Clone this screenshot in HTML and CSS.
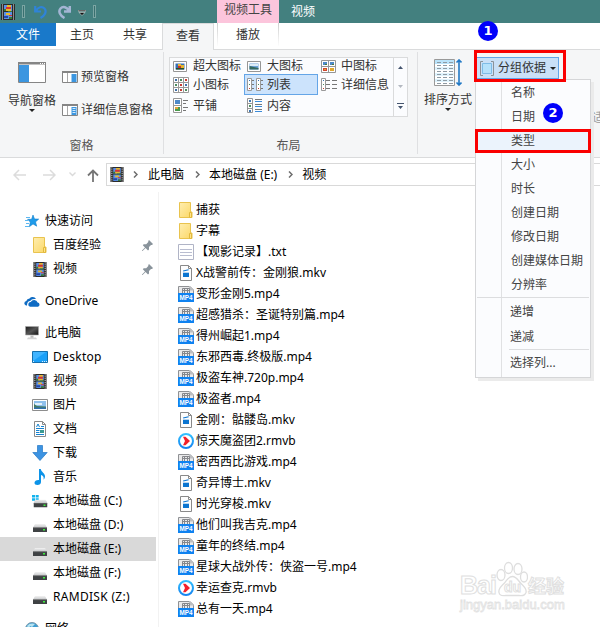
FILE: index.html
```html
<!DOCTYPE html>
<html lang="zh-CN">

<head>
    <meta charset="UTF-8" />
    <meta name="viewport" content="width=device-width, initial-scale=1" />
    <title>视频</title>
    <link rel="stylesheet" href="styles.css">
</head>

<body>
    <!-- icons -->
    <svg class="defs" width="0" height="0">
        <defs>
            <linearGradient id="gFolder" x1="0" y1="0" x2="1" y2="1"><stop offset="0" stop-color="#ffeeb0" /><stop offset="1" stop-color="#fbd766" /></linearGradient>
            <linearGradient id="gPlay" x1="0" y1="0" x2="0" y2="1"><stop offset="0" stop-color="#32c0ff" /><stop offset="1" stop-color="#1583f0" /></linearGradient>
            <linearGradient id="gScreen" x1="0" y1="0" x2="1" y2="1"><stop offset="0" stop-color="#1a1a1a" /><stop offset=".5" stop-color="#555" /><stop offset="1" stop-color="#111" /></linearGradient>
            <linearGradient id="gDrive" x1="0" y1="0" x2="0" y2="1"><stop offset="0" stop-color="#f3f3f3" /><stop offset="1" stop-color="#c4c6c8" /></linearGradient>
        </defs>
        <symbol id="film" viewBox="0 0 14 16">
            <path fill="#2b2b2b" d="M0 0h14v16H0z" />
            <path stroke="#e8e8e8" stroke-width="1" stroke-dasharray="1 1" d="M1.500 .5v15M12.500 .5v15" />
            <path fill="#5b8fe6" d="M3 1h8v6H3zM3 8h8v7H3z" />
            <path fill="#e8b92c" d="M6 1h4v2H6zM5 5h5v2H5zM5 9h4v2H5z" />
            <path fill="#d9342b" d="M5 3h5v2H5zM8 11h3v1H8z" />
            <path fill="#3a7a35" d="M3 5h2v2H3zM7 7h4v1H7zM8 13h3v2H8z" />
            <path fill="#2547a8" d="M3 12h4v2H3z" />
        </symbol>
        <symbol id="folder" viewBox="0 0 14 16">
            <path fill="url(#gFolder)" stroke="#e9c34e" d="M.5.5h11v9.500h1.500v5.500H.5z" />
            <path fill="#ffe48a" stroke="#e2b93c" d="M10.500 10.500h2v5h-2z" />
        </symbol>
        <symbol id="txt" viewBox="0 0 16 16">
            <path fill="#fff" stroke="#b0b4c6" d="M.5.5h15v15H.5z" />
            <path stroke="#b9bdd0" d="M2 5.500h12M2 8.500h12M2 11.500h12" />
        </symbol>
        <symbol id="mkv" viewBox="0 0 16 16">
            <path fill="#fdfdfd" stroke="#898989" d="M2.500.5h8l3 3v12h-11z" />
            <path fill="none" stroke="#898989" d="M10.500.5v3h3" />
            <path fill="#0b75d1" d="M5 7h6v5H5zM5 5.500l5.500-1.300.3 1-5.500 1.400z" />
            <path stroke="#fff" stroke-width=".7" d="M5 7.500h6" />
        </symbol>
        <symbol id="mp4" viewBox="0 0 16 16">
            <path fill="#e9e9ea" stroke="#8f9194" d="M.5 15V.5H12L15.500 4v11z" />
            <path fill="#bcbec1" d="M11 0v4.500h5V4l-4-4z" />
            <path fill="none" stroke="#85878b" d="M4.500 7V2.500h7V7M6.500 2.500V7M9.500 2.500V7M4.500 4.500h7" />
            <path fill="#0f82f0" d="M0 7h16v9H0z" />
            <text class="mp4-text" x="8" y="14" text-anchor="middle" textLength="13" lengthAdjust="spacingAndGlyphs">MP4</text>
        </symbol>
        <symbol id="rmvb" viewBox="0 0 16 16">
            <circle cx="8" cy="8" r="7" fill="#fff" stroke="url(#gPlay)" stroke-width="2" />
            <path fill="#f3202a" d="M5 3.800h2.500L12 8l-4.500 4.200H5L7 8z" />
        </symbol>
        <symbol id="star" viewBox="0 0 14 14">
            <path fill="#1f9bea" stroke="#1180cb" stroke-width=".6" d="M8 1l1.500 4 4.200.1-3.200 2.800 1.200 4.300L8 9.900l-3.600 2.800.9-4.600L2.600 5.300h4z" />
            <path stroke="#5db7f0" d="M1 3.500h4M0 6.500h3M1 9.500h3M0 12.500h4" />
        </symbol>
        <symbol id="pin" viewBox="0 0 11 11">
            <path fill="#89939b" d="M7 0l4 4-1 1-1 0-2 2 0 2.500-1 1L3.600 8 .5 11H0v-.5L3 7.400.8 5.200l.9-1H4.200L6.300 2V.9z" />
        </symbol>
        <symbol id="cloud" viewBox="0 0 16 11">
            <path fill="#0f6cc4" d="M3 9.500H2A2.300 2.300 0 0 1 2.300 5 3.400 3.400 0 0 1 5.500 2.500 4 4 0 0 1 12 3C8 2.500 6.500 4 6.300 5 4 5 3 7 3 9.500z" />
            <path fill="#0f6cc4" d="M6 10.800a2.400 2.400 0 0 1 .8-4.700 3.700 3.700 0 0 1 6.800.4 2.200 2.200 0 0 1 .3 4.300z" />
        </symbol>
        <symbol id="pc" viewBox="0 0 14 14">
            <path fill="url(#gScreen)" stroke="#aaa" stroke-width=".6" d="M.5.5h13v8.500H.5z" />
            <path fill="#bbb" d="M5.500 9.500h3V12h-3z" />
            <path fill="#d4d4d4" d="M3 11.500h8l1 1.800H2z" />
        </symbol>
        <symbol id="desktop" viewBox="0 0 16 12">
            <path fill="#1ba0f8" stroke="#1570ae" d="M.5.5h15v11H.5z" />
            <path fill="#40b4ff" d="M1 10L14 1H1z" />
            <path stroke="#d5efff" stroke-dasharray="1 1" d="M1 10.500h2M10 10.500h5" />
        </symbol>
        <symbol id="picture" viewBox="0 0 16 12">
            <path fill="#fff" stroke="#8d8d8d" d="M.5.5h15v11H.5z" />
            <path fill="#8fc0ec" d="M2 2h12v8H2z" />
            <path fill="#e4f1fb" d="M3 4h7v2H3z" />
            <path fill="#467c64" d="M2 5l3 2 9 .5V9H2z" />
            <path fill="#2f6fae" d="M2 8.500h12V10H2z" />
        </symbol>
        <symbol id="doc" viewBox="0 0 14 16">
            <path fill="#fff" stroke="#8a8a8a" d="M1.500.5h8l3 3v12h-11z" />
            <path fill="none" stroke="#8a8a8a" d="M9.500.5v3h3" />
            <path fill="none" stroke="#1683d0" d="M3.500 6l1.500-3 1.500 3M8 5.500h3M3 7.500h8M3 9.500h3.500M3 11.500h3.500M3 13.500h8" />
            <path fill="#3b9a92" d="M7 9h4v3H7z" />
        </symbol>
        <symbol id="download" viewBox="0 0 16 16">
            <path fill="#3c93e2" stroke="#2477c4" stroke-width=".7" d="M5.500.5h5v7h4.700L8 15.500.8 7.500h4.700z" />
        </symbol>
        <symbol id="music" viewBox="0 0 12 16">
            <path fill="#0c93e8" d="M5 0h1.800c.2 3 4.500 4.300 4.200 7.500-.1 1.500-.7 2.500-1.500 3.200.8-3-.7-4.200-2.500-4.700v7c0 1.700-1.500 3-3.500 3S.5 15 .5 13.700C.5 12 2.500 10.700 5 11z" />
        </symbol>
        <symbol id="drive" viewBox="0 0 14 8">
            <path fill="url(#gDrive)" d="M2 0h10l2 3.500H0z" />
            <path fill="#3f4244" d="M0 3.500h14V8H0z" />
            <path fill="#777" d="M0 3.500h14v.6H0z" />
            <path fill="#3cf03c" d="M10 5h2v1.500h-2z" />
        </symbol>
        <symbol id="sysdrive" viewBox="0 0 16 14">
            <path fill="#12b3ee" d="M0 1h3v2.500H0zM3.700 1h3v2.500h-3zM0 4.200h3v2.500H0zM3.700 4.200h3v2.500h-3z" />
            <use href="#drive" x="1.500" y="5.500" width="14" height="8" />
        </symbol>
        <symbol id="globe" viewBox="0 0 14 14">
            <circle cx="7" cy="7" r="6.500" fill="#3f9ed2" stroke="#7b98aa" />
            <path fill="#b7e3f1" d="M2 4c2-3 6-3 8-2L7 5 5 4 4 7z" />
        </symbol>
        <symbol id="preview" viewBox="0 0 16 12">
            <path fill="#fff" stroke="#858585" d="M.5.5h15v11H.5z" />
            <path fill="#858585" d="M0 0h16v2H0z" />
            <path stroke="#a8a8a8" d="M5.500 2v9" />
            <path fill="#3b96e0" d="M9.500 3h5v8h-5z" />
        </symbol>
        <symbol id="details" viewBox="0 0 16 12">
            <use href="#preview" width="16" height="12" />
            <path stroke="#d4eafb" d="M10.500 4.500h3M10.500 6.500h3M10.500 8.500h3" />
        </symbol>
        <symbol id="thumb" viewBox="0 0 14 11">
            <path fill="#fff" stroke="#969696" d="M.5.5h13v10H.5z" />
            <path fill="#356fb8" d="M2.500 2.500h9v6h-9z" />
            <path fill="#e6b52e" d="M5 3h3v2H5zM7 4h4v3H7z" />
            <path fill="#c8342b" d="M5 5h3v2H5z" />
            <path fill="#294d26" d="M3 7h8v1.500H3z" />
        </symbol>
        <symbol id="large" viewBox="0 0 14 11">
            <path fill="#fff" stroke="#969696" d="M.5.5h13v10H.5z" />
            <path fill="#6fa5dd" d="M2.500 2.500h9v6h-9z" />
            <path fill="#dcecf8" d="M3 3h8v2H3z" />
            <path fill="#356b61" d="M2.500 5l9 2v1.500h-9z" />
        </symbol>
        <symbol id="medium" viewBox="0 0 15 13">
            <path fill="#fff" stroke="#969696" d="M.5.5h14v12H.5zM7.500.5v12M.5 6.500h14" />
            <path fill="#4d89c8" d="M2 2h4v3H2zM9 2h4v3H9z" />
            <path fill="#d1452f" d="M2 8h4v3H2z" />
            <path fill="#e0a72c" d="M9 8h4v3H9zM3 9h2v1H3z" />
            <path fill="#4a7a3d" d="M4 4h2v1H4zM11 4h2v1h-2z" />
        </symbol>
        <symbol id="small" viewBox="0 0 16 16">
            <path fill="#fff" stroke="#999" d="M.5.5h15v15H.5zM5.500.5v15M10.500.5v15M.5 5.500h15M.5 10.500h15" />
            <path fill="#3e6fa9" d="M2 2h2v2H2zM12 7h2v2h-2zM2 12h2v2H2z" />
            <path fill="#4b8b5f" d="M7 2h2v2H7zM2 7h2v2H2zM12 12h2v2h-2z" />
            <path fill="#c73b32" d="M12 2h2v2h-2zM7 7h2v2H7zM7 12h2v2H7z" />
        </symbol>
        <symbol id="list" viewBox="0 0 16 13">
            <path fill="#fff" stroke="#999" d="M.5.5h4v12h-4zM9.500.5h4v12h-4z" />
            <path stroke="#3e78b5" d="M2 2.500h1M11 2.500h1" />
            <path stroke="#4b8b5f" d="M2 6.500h1M11 6.500h1" />
            <path stroke="#c73b32" d="M2 10.500h1M11 10.500h1" />
            <path stroke="#777" d="M5 2.500h2M5 6.500h2M5 10.500h2M14 2.500h2M14 6.500h2M14 10.500h2" />
        </symbol>
        <symbol id="detail" viewBox="0 0 16 13">
            <path fill="#fff" stroke="#999" d="M.5.5h4v12h-4z" />
            <path stroke="#3e78b5" d="M2 2.500h1" />
            <path stroke="#4b8b5f" d="M2 6.500h1" />
            <path stroke="#c73b32" d="M2 10.500h1" />
            <path stroke="#777" d="M5 2.500h4M11 2.500h5M5 6.500h4M11 6.500h5M5 10.500h4M11 10.500h5" />
        </symbol>
        <symbol id="tiles" viewBox="0 0 16 15">
            <path fill="#fff" stroke="#969696" d="M.5.5h8v14h-8zM.5 7.500h8" />
            <path fill="#4d89c8" d="M2 2h5v4H2z" />
            <path fill="#4a9b4d" d="M2 9h5v4H2z" />
            <path fill="#e4a53a" d="M2 9h3v2H2z" />
            <path stroke="#777" d="M10 2.500h5M10 5.500h3M10 9.500h5M10 12.500h3" />
        </symbol>
        <symbol id="content" viewBox="0 0 16 15">
            <path fill="#fff" stroke="#969696" d="M.5.5h5v14h-5zM.5 5.500h5M.5 10.500h5" />
            <path fill="#3e78b5" d="M2 2h2v2H2zM2 12h2v2H2z" />
            <path fill="#4b8b5f" d="M2 7h2v2H2z" />
            <path stroke="#777" d="M8 1.500h7M8 6.500h7M8 11.500h7" />
            <path stroke="#3b8bd8" d="M8 3.500h7M8 8.500h7M8 13.500h7" />
        </symbol>
        <symbol id="down" viewBox="0 0 6 3">
            <path fill="#222" d="M0 0h6L3 3z" />
        </symbol>
    </svg>

    <div class="window">
        <header class="titlebar">
            <div class="quick">
                <svg width="14" height="16"><use href="#film" /></svg>
                <span class="bar"></span>
                <svg class="undo" width="13" height="14" viewBox="0 0 13 14"><path fill="none" stroke="#2f83d8" stroke-width="2.200" d="M1.200 1v5.500H7M2 6C4 2 8 .8 10.500 3.500c2.500 3 .5 7-4 9.500" /></svg>
                <svg class="redo" width="13" height="14" viewBox="0 0 13 14"><path fill="none" stroke="#a3b5d4" stroke-width="2.500" d="M11.800 1v5.500H6M11 6C9 2 5 .8 2.500 3.500c-2.500 3-.5 7 4 9.500" /></svg>
                <svg class="more" width="8" height="6" viewBox="0 0 8 6"><path fill="#111" stroke="#fff" stroke-width=".5" d="M0 0h8v1.200H0zM1 2.500h6L4 5.500z" /></svg>
                <span class="bar"></span>
            </div>
            <div class="context">视频工具</div>
            <div class="title">视频</div>
        </header>

        <nav class="tabs">
            <div class="tab file">文件</div>
            <div class="tab home">主页</div>
            <div class="tab share">共享</div>
            <div class="tab active">查看</div>
            <div class="tab play">播放</div>
        </nav>

        <section class="ribbon">
            <div class="group panes">
                <div class="group-body">
                    <div class="big-btn">
                        <svg width="28" height="21" viewBox="0 0 28 21"><path fill="#fff" stroke="#858585" d="M.5.5h27v20H.5z" /><path fill="#858585" d="M0 0h28v2.500H0z" /><path fill="#3b96e0" d="M1 3h10v17H1z" /><path stroke="#fff" d="M22 1.500h1M24 1.500h1M26 1.500h1" /></svg>
                        <span>导航窗格</span>
                        <svg class="caret" width="6" height="3"><use href="#down" /></svg>
                    </div>
                    <div class="side-btns">
                        <div class="btn"><svg width="16" height="12"><use href="#preview" /></svg>预览窗格</div>
                        <div class="btn"><svg width="16" height="12"><use href="#details" /></svg>详细信息窗格</div>
                    </div>
                </div>
                <div class="group-name">窗格</div>
            </div>
            <div class="group layout">
                <div class="gallery">
                    <div class="views">
                        <div class="view"><span class="ico"><svg width="14" height="11"><use href="#thumb" /></svg></span>超大图标</div>
                        <div class="view"><span class="ico"><svg width="14" height="11"><use href="#large" /></svg></span>大图标</div>
                        <div class="view"><span class="ico"><svg width="15" height="13"><use href="#medium" /></svg></span>中图标</div>
                        <div class="view"><span class="ico"><svg width="16" height="16"><use href="#small" /></svg></span>小图标</div>
                        <div class="view selected"><span class="ico"><svg width="16" height="13"><use href="#list" /></svg></span>列表</div>
                        <div class="view"><span class="ico"><svg width="16" height="13"><use href="#detail" /></svg></span>详细信息</div>
                        <div class="view"><span class="ico"><svg width="16" height="15"><use href="#tiles" /></svg></span>平铺</div>
                        <div class="view"><span class="ico"><svg width="16" height="15"><use href="#content" /></svg></span>内容</div>
                    </div>
                    <div class="scroll">
                        <svg width="5" height="3" viewBox="0 0 5 3"><path fill="#44546e" d="M0 3h5L2.500 0z" /></svg>
                        <svg width="5" height="3" viewBox="0 0 5 3"><path fill="#b4b9c1" d="M0 0h5L2.500 3z" /></svg>
                        <svg width="7" height="6" viewBox="0 0 7 6"><path fill="#44546e" d="M0 0h7v1H0zM1 3h5L3.500 6z" /></svg>
                    </div>
                </div>
                <div class="group-name">布局</div>
            </div>
            <div class="group current">
                <div class="big-btn">
                    <svg width="28" height="27" viewBox="0 0 28 27"><path fill="#fff" stroke="#999" d="M.5.5h20v26H.5z" /><path fill="#b9e3fa" d="M1 1h19v4H1z" /><path fill="#dff3fd" d="M1 8h19v3H1zM1 14h19v3H1zM1 20h19v3H1z" /><path stroke="#8e9aa3" stroke-dasharray="4 2" d="M3 3.500h16M3 6.500h16M3 9.500h16M3 12.500h16M3 15.500h16M3 18.500h16M3 21.500h16M3 24.500h16" /><path fill="none" stroke="#2179c5" stroke-width="1.600" d="M25 2v23M22.500 3.500L25 1l2.500 2.500M22.500 23.500L25 26l2.500-2.500" /></svg>
                    <span>排序方式</span>
                    <svg class="caret" width="6" height="3"><use href="#down" /></svg>
                </div>
                <div class="group-by">
                    <svg width="14" height="15" viewBox="0 0 14 15"><path fill="none" stroke="#8c9299" d="M3 .5H.5v14H3M11 .5h2.500v14H11" /><path fill="#b5e1fb" stroke="#7fbce6" d="M2.500 2.500h9v10h-9z" /></svg>
                    <span>分组依据</span>
                    <svg width="6" height="3"><use href="#down" /></svg>
                </div>
                <div class="fit">适</div>
            </div>
        </section>

        <div class="address">
            <svg class="back" width="13" height="12" viewBox="0 0 13 12"><path fill="none" stroke="#dcdcdc" stroke-width="1.500" d="M13 6H1M6 1L1 6l5 5" /></svg>
            <svg class="fwd" width="13" height="12" viewBox="0 0 13 12"><path fill="none" stroke="#dcdcdc" stroke-width="1.500" d="M0 6h12M7 1l5 5-5 5" /></svg>
            <svg class="recent" width="7" height="5" viewBox="0 0 7 5"><path fill="none" stroke="#dadada" stroke-width="1.400" d="M.5.5l3 3 3-3" /></svg>
            <svg class="up" width="12" height="13" viewBox="0 0 12 13"><path fill="none" stroke="#757575" stroke-width="1.800" d="M6 13V1.500M1 6.500l5-5 5 5" /></svg>
            <div class="path">
                <svg width="14" height="15"><use href="#film" /></svg>
                <svg class="chev" width="5" height="7" viewBox="0 0 5 7"><path fill="none" stroke="#6d6d6d" stroke-width="1.500" d="M1 .5l3 3-3 3" /></svg>
                <span>此电脑</span>
                <svg class="chev" width="5" height="7" viewBox="0 0 5 7"><path fill="none" stroke="#6d6d6d" stroke-width="1.500" d="M1 .5l3 3-3 3" /></svg>
                <span>本地磁盘 (E:)</span>
                <svg class="chev" width="5" height="7" viewBox="0 0 5 7"><path fill="none" stroke="#6d6d6d" stroke-width="1.500" d="M1 .5l3 3-3 3" /></svg>
                <span>视频</span>
            </div>
        </div>

        <main class="content">
            <aside class="tree">
                <div class="node root"><span class="ico"><svg width="14" height="14"><use href="#star" /></svg></span>快速访问</div>
                <div class="node"><span class="ico"><svg width="14" height="16"><use href="#folder" /></svg></span>百度经验<svg class="pin" width="11" height="11"><use href="#pin" /></svg></div>
                <div class="node"><span class="ico"><svg width="14" height="15"><use href="#film" /></svg></span>视频<svg class="pin" width="11" height="11"><use href="#pin" /></svg></div>
                <div class="node root gap"><span class="ico"><svg width="16" height="11"><use href="#cloud" /></svg></span>OneDrive</div>
                <div class="node root gap"><span class="ico"><svg width="14" height="14"><use href="#pc" /></svg></span>此电脑</div>
                <div class="node latin"><span class="ico"><svg width="16" height="12"><use href="#desktop" /></svg></span>Desktop</div>
                <div class="node"><span class="ico"><svg width="14" height="15"><use href="#film" /></svg></span>视频</div>
                <div class="node"><span class="ico"><svg width="16" height="12"><use href="#picture" /></svg></span>图片</div>
                <div class="node"><span class="ico"><svg width="14" height="16"><use href="#doc" /></svg></span>文档</div>
                <div class="node"><span class="ico"><svg width="16" height="16"><use href="#download" /></svg></span>下载</div>
                <div class="node"><span class="ico"><svg width="12" height="16"><use href="#music" /></svg></span>音乐</div>
                <div class="node"><span class="ico"><svg width="16" height="14"><use href="#sysdrive" /></svg></span>本地磁盘 (C:)</div>
                <div class="node disk"><span class="ico"><svg width="14" height="8"><use href="#drive" /></svg></span>本地磁盘 (D:)</div>
                <div class="node disk selected"><span class="ico"><svg width="14" height="8"><use href="#drive" /></svg></span>本地磁盘 (E:)</div>
                <div class="node disk"><span class="ico"><svg width="14" height="8"><use href="#drive" /></svg></span>本地磁盘 (F:)</div>
                <div class="node disk latin"><span class="ico"><svg width="14" height="8"><use href="#drive" /></svg></span>RAMDISK (Z:)</div>
                <div class="node root gap"><span class="ico"><svg width="14" height="14"><use href="#globe" /></svg></span>网络</div>
            </aside>
            <div class="files">
                <div class="row"><span class="ico"><svg width="14" height="16"><use href="#folder" /></svg></span>捕获</div>
                <div class="row"><span class="ico"><svg width="14" height="16"><use href="#folder" /></svg></span>字幕</div>
                <div class="row"><span class="ico"><svg width="16" height="16"><use href="#txt" /></svg></span>【观影记录】.txt</div>
                <div class="row"><span class="ico"><svg width="16" height="16"><use href="#mkv" /></svg></span>X战警前传：金刚狼.mkv</div>
                <div class="row"><span class="ico"><svg width="16" height="16"><use href="#mp4" /></svg></span>变形金刚5.mp4</div>
                <div class="row"><span class="ico"><svg width="16" height="16"><use href="#mp4" /></svg></span>超感猎杀：圣诞特别篇.mp4</div>
                <div class="row"><span class="ico"><svg width="16" height="16"><use href="#mp4" /></svg></span>得州崛起1.mp4</div>
                <div class="row"><span class="ico"><svg width="16" height="16"><use href="#mp4" /></svg></span>东邪西毒.终极版.mp4</div>
                <div class="row"><span class="ico"><svg width="16" height="16"><use href="#mp4" /></svg></span>极盗车神.720p.mp4</div>
                <div class="row"><span class="ico"><svg width="16" height="16"><use href="#mp4" /></svg></span>极盗者.mp4</div>
                <div class="row"><span class="ico"><svg width="16" height="16"><use href="#mkv" /></svg></span>金刚：骷髅岛.mkv</div>
                <div class="row"><span class="ico"><svg width="16" height="16"><use href="#rmvb" /></svg></span>惊天魔盗团2.rmvb</div>
                <div class="row"><span class="ico"><svg width="16" height="16"><use href="#mp4" /></svg></span>密西西比游戏.mp4</div>
                <div class="row"><span class="ico"><svg width="16" height="16"><use href="#mkv" /></svg></span>奇异博士.mkv</div>
                <div class="row"><span class="ico"><svg width="16" height="16"><use href="#mkv" /></svg></span>时光穿梭.mkv</div>
                <div class="row"><span class="ico"><svg width="16" height="16"><use href="#mp4" /></svg></span>他们叫我吉克.mp4</div>
                <div class="row"><span class="ico"><svg width="16" height="16"><use href="#mp4" /></svg></span>童年的终结.mp4</div>
                <div class="row"><span class="ico"><svg width="16" height="16"><use href="#mp4" /></svg></span>星球大战外传：侠盗一号.mp4</div>
                <div class="row"><span class="ico"><svg width="16" height="16"><use href="#rmvb" /></svg></span>幸运查克.rmvb</div>
                <div class="row"><span class="ico"><svg width="16" height="16"><use href="#mp4" /></svg></span>总有一天.mp4</div>
            </div>
        </main>

        <!-- group by dropdown -->
        <div class="menu">
            <div class="menu-part">
                <div class="item">名称</div>
                <div class="item">日期</div>
                <div class="item hover">类型</div>
                <div class="item">大小</div>
                <div class="item">时长</div>
                <div class="item">创建日期</div>
                <div class="item">修改日期</div>
                <div class="item">创建媒体日期</div>
                <div class="item">分辨率</div>
            </div>
            <div class="menu-part order">
                <div class="item">递增</div>
                <div class="item">递减</div>
                <div class="line"></div>
                <div class="item">选择列...</div>
            </div>
        </div>

        <div class="mark mark-button"></div>
        <div class="mark mark-item"></div>
        <div class="step step-one">1</div>
        <div class="step step-two">2</div>

        <div class="watermark">
            <div class="brand">
                <span class="bai">Bai</span>
                <span class="paw">
                    <svg width="32" height="36" viewBox="0 0 32 36"><g fill="#fff" stroke="#dedede" stroke-width="1.300"><ellipse cx="5" cy="14" rx="4" ry="5.500" /><ellipse cx="12.500" cy="7" rx="4" ry="5.500" /><ellipse cx="22" cy="8" rx="4" ry="5.500" /><ellipse cx="28" cy="16" rx="3.500" ry="5" /><path d="M16.500 15.500c4 0 5.500 4 8.500 7s6 5 5 9c-1 3-4 3.500-7 3H10c-3 .5-6.500 0-7-3-1-4 2-6 5-9s4-7 8.500-7z" /></g></svg>
                    <span class="du">du</span>
                </span>
                <span class="jingyan">经验</span>
            </div>
            <div class="site">jingyan.baidu.com</div>
        </div>
    </div>
</body>

</html>
```
FILE: styles.css
```css
:root {
    --teal: #43807f;
    --ribbon: #f5f6f7;
    --line: #dadbdc;
    --red: #fa0000;
}

* {
    box-sizing: border-box;
}

body {
    margin: 0;
    font-family: "Noto Sans", "Noto Sans CJK SC", sans-serif;
    font-size: 12px;
    line-height: 16px;
    color: #000;
    background: #fff;
}

svg {
    display: block;
    flex: none;
}

.defs {
    position: absolute;
}

.window {
    position: relative;
    width: 600px;
    height: 627px;
    overflow: hidden;
    display: flex;
    flex-direction: column;
    white-space: nowrap;
}

/* title bar */
.titlebar {
    display: flex;
    flex: none;
    height: 23px;
    background: var(--teal);
}

.quick {
    display: flex;
    align-items: center;
    width: 217px;
    padding-left: 1px;
}

.bar {
    width: 3px;
    height: 13px;
    margin-left: 7px;
    border: 1px solid #7ba5a3;
    background: #39706f;
}

.undo {
    margin-left: 9px;
}

.redo {
    margin-left: 11px;
}

.more {
    margin: 3px 0 0 7px;
}

.context {
    width: 62px;
    padding-top: 2px;
    text-align: center;
    color: #444;
    background: #fcc5dc;
}

.title {
    padding: 4px 0 0 12px;
    color: #fff;
}

/* tabs */
.tabs {
    display: flex;
    flex: none;
    height: 27px;
    border-bottom: 1px solid var(--line);
    color: #333;
}

.tab {
    display: flex;
    justify-content: center;
    align-items: center;
    height: 23px;
    padding-top: 1px;
}

.file {
    width: 56px;
    color: #fff;
    background: #1979ca;
}

.home {
    width: 52px;
}

.share {
    width: 54px;
}

.tab.active {
    width: 52px;
    height: 27px;
    padding-bottom: 3px;
    border: 1px solid var(--line);
    border-bottom: none;
    background: var(--ribbon);
}

.play {
    width: 62px;
    margin-left: 3px;
    border: 1px solid;
    border-width: 0 1px;
    border-image: linear-gradient(#ccc, #fff) 1;
}

/* ribbon */
.ribbon {
    display: flex;
    flex: none;
    height: 108px;
    padding-top: 2px;
    background: var(--ribbon);
    border-bottom: 1px solid var(--line);
    color: #333;
}

.group {
    display: flex;
    flex: none;
    flex-direction: column;
    height: 102px;
    border-right: 1px solid #dfe0e2;
}

.group-name {
    margin-top: auto;
    text-align: center;
    color: #555;
}

.panes {
    width: 164px;
}

.group-body {
    display: flex;
    padding: 10px 0 0 8px;
}

.big-btn {
    display: flex;
    flex: none;
    flex-direction: column;
    align-items: center;
    width: 48px;
}

.big-btn span {
    margin-top: 10px;
}

.big-btn .caret {
    margin-top: 0;
}

.side-btns {
    display: flex;
    flex-direction: column;
    gap: 17px;
    padding: 7px 0 0 6px;
}

.btn {
    display: flex;
    align-items: center;
    gap: 3px;
}

.layout {
    width: 254px;
    padding: 5px 9px 0 5px;
}

.gallery {
    display: flex;
    height: 60px;
    border: 1px solid var(--line);
    background: #fbfcfe;
}

.views {
    display: grid;
    grid-template-columns: 74px 74px 75px;
    grid-template-rows: 16px 21px 21px;
}

.view {
    display: flex;
    align-items: center;
    padding-left: 2px;
}

.view .ico {
    width: 21px;
    display: flex;
}

.view .ico svg {
    margin-left: 1px;
}

.view.selected {
    padding-left: 1px;
    border: 1px solid #64a5e7;
    background: #cce3fc;
}

.scroll {
    display: flex;
    flex-direction: column;
    align-items: center;
    justify-content: space-between;
    width: 14px;
    padding: 8px 0 7px;
    border-left: 1px solid var(--line);
}

.current {
    flex: 1;
    flex-direction: row;
    min-width: 0;
    border: none;
    padding: 5px 0 0 6px;
}

.current .big-btn {
    padding-top: 2px;
}

.current .big-btn span {
    margin-top: 6px;
}

.group-by {
    display: flex;
    flex: none;
    align-items: center;
    gap: 4px;
    width: 83px;
    height: 22px;
    margin-left: 4px;
    padding-left: 3px;
    border: 1px solid #64a5e7;
    background: #cae0f7;
}

.fit {
    margin: 53px 0 0 33px;
    color: #999;
}

/* address bar */
.address {
    display: flex;
    align-items: center;
    flex: none;
    height: 34px;
    padding: 0 0 1px 13px;
}

.fwd {
    margin-left: 17px;
}

.recent {
    margin-left: 13px;
}

.up {
    margin: 1px 7px 0 11px;
}

.path {
    display: flex;
    align-items: center;
    flex: 1;
    height: 23px;
    padding-left: 3px;
    border: 1px solid #d9d9d9;
    border-right: none;
}

.chev {
    margin: 0 10px 0 9px;
}

.path span + .chev {
    margin: 0 9px 0 11px;
}

/* tree and files */
.content {
    display: flex;
    flex: 1;
    min-height: 0;
}

.tree {
    width: 159px;
    flex: none;
    padding-top: 17px;
    border-right: 1px solid #f2f2f2;
}

.node {
    display: flex;
    align-items: center;
    height: 24px;
    width: 156px;
    padding-left: 32px;
}

.node .ico {
    display: flex;
    justify-content: center;
    width: 16px;
    margin-right: 5px;
}

.root {
    padding-left: 24px;
}

.latin {
    letter-spacing: .3px;
}

.gap {
    margin-top: 8px;
}

.disk .ico {
    padding-top: 6px;
}

.node.selected {
    background: #d9d9d9;
}

.pin {
    margin: 0 3px 0 auto;
}

.files {
    padding: 7px 0 0 19px;
}

.row {
    display: flex;
    align-items: center;
    height: 21px;
}

.row .ico {
    display: flex;
    justify-content: center;
    width: 16px;
    margin-right: 2px;
}

.mp4-text {
    font: bold 7px "Liberation Sans", sans-serif;
    fill: #fff;
}

/* dropdown */
.menu {
    position: absolute;
    left: 475px;
    top: 79px;
    width: 116px;
    height: 299px;
    border: 1px solid #d5d6d8;
    background: linear-gradient(90deg, transparent 25px, #e0e1e3 25px, #e0e1e3 26px, transparent 26px) #fbfcfe;
    box-shadow: 3px 3px 0 #ebebeb;
    color: #444;
}

.menu-part {
    padding: 1px 1px 0;
}

.item {
    height: 24px;
    padding: 4px 0 0 34px;
}

.item.hover {
    background: #ebf3fc;
}

.order {
    margin: 0 1px;
    border-top: 1px solid #dcdddf;
    padding: 2px 0 0;
}

.order .item {
    height: 25px;
    padding-left: 33px;
}

.order .line {
    height: 1px;
    margin: -1px 0 1px 32px;
    background: #dcdddf;
}

/* numbered marks */
.mark {
    position: absolute;
    border: 3px solid var(--red);
}

.mark-button {
    left: 474px;
    top: 50px;
    width: 92px;
    height: 32px;
}

.mark-item {
    left: 475px;
    top: 129px;
    width: 116px;
    height: 24px;
}

.step {
    position: absolute;
    width: 20px;
    height: 20px;
    border-radius: 50%;
    background: #0000fa;
    color: #fff;
    font: bold 13px/20px "DejaVu Sans", sans-serif;
    text-align: center;
}

.step-one {
    left: 478px;
    top: 21px;
}

.step-two {
    left: 543px;
    top: 103px;
}

/* watermark */
.watermark {
    position: absolute;
    left: 460px;
    top: 561px;
    width: 110px;
    color: #fff;
    font-family: "Liberation Sans", "Noto Sans CJK SC", sans-serif;
    font-weight: bold;
    -webkit-text-stroke: 1px #e0e0e0;
}

.brand {
    display: flex;
    align-items: flex-end;
    height: 36px;
}

.bai {
    font-size: 25px;
    line-height: 23px;
    width: 36px;
    letter-spacing: -1px;
}

.paw {
    position: relative;
}

.du {
    position: absolute;
    left: 8px;
    top: 18px;
    font-size: 14px;
}

.jingyan {
    font-size: 18px;
    line-height: 20px;
}

.site {
    font-size: 13px;
    line-height: 16px;
    font-weight: normal;
    color: #fff;
    -webkit-text-stroke: .8px #e2e2e2;
}
```
